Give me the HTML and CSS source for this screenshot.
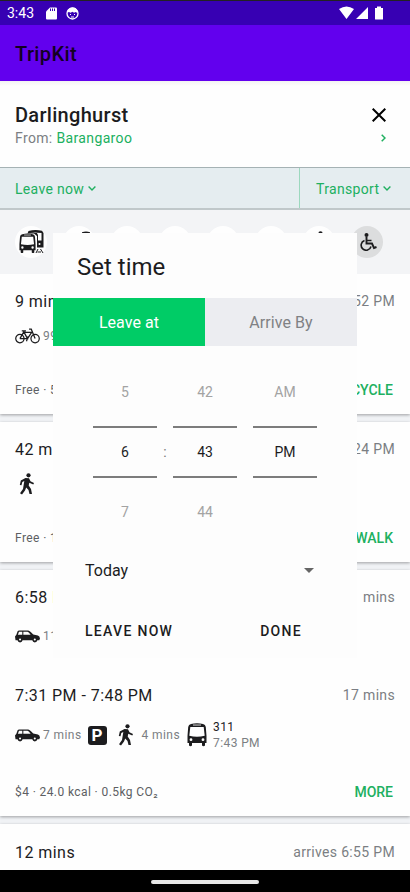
FILE: index.html
```html
<!DOCTYPE html>
<html lang="en">
<head>
<meta charset="utf-8">
<title>TripKit</title>
<link rel="stylesheet" href="styles.css">
</head>
<body>
<svg class="defs" width="0" height="0">
  <symbol id="bus" viewBox="0 0 20 24"><path fill-rule="evenodd" d="M4 1Q10-.6 16 1Q18.500 1.500 18.800 4L19.500 13V20H18V22.500Q16.500 24 15 22.500V20H5V22.500Q3.500 24 2 22.500V20H.5V13L1.200 4Q1.500 1.500 4 1ZM3.300 4L2.300 12.800Q10 14.500 17.700 12.800L16.700 4ZM4 15.300A1.400 1.400 0 1 0 4 18.100A1.400 1.400 0 1 0 4 15.300ZM16 15.300A1.400 1.400 0 1 0 16 18.100A1.400 1.400 0 1 0 16 15.300Z"/><path fill="#999" d="M6 1.300H14V2.800H6Z"/></symbol>
  <symbol id="walk" viewBox="0 0 16 22"><circle cx="9.500" cy="2.300" r="2.100"/><path d="M6.500 5L10 5.200L11.500 8.300L15 10L14.300 11.500L10.300 9.800L9.700 12.500L12 16L13 21H10.500L9.500 17L7.200 14.500L6 17.500L3 21.500L1 20.300L4 16L5.300 8L3.300 9L2.500 12.300L.8 12L1.800 7.600Z"/></symbol>
  <symbol id="car" viewBox="0 0 24 12"><path fill-rule="evenodd" d="M2.500 1Q3 .2 4 .2H12.500Q14 .2 17.500 4L22 5Q23.700 5.500 24 8L23.300 9.700H21.500A2.500 2.500 0 0 1 16.600 9.700H7.300A2.500 2.500 0 0 1 2.400 9.700H.5L0 6L1.300 4.300ZM3.800 1.400L2.800 4.200H7V1.400ZM8 1.400V4.200H15Q13 1.600 12 1.400ZM4.850 7.900A1 1 0 1 0 4.850 9.900A1 1 0 1 0 4.850 7.900ZM19 7.900A1 1 0 1 0 19 9.900A1 1 0 1 0 19 7.900Z"/></symbol>
  <symbol id="bike" viewBox="0 0 24 15"><g fill="none" stroke="#1c1c1e" stroke-width="1.200"><circle cx="4.700" cy="10" r="4"/><circle cx="19.300" cy="10" r="4"/><path d="M4.700 10L8.500 3.500L12 10H4.700M12 10L16 4H8.700M19.300 10L15.600 1H13.500M6.500 2.600H10.500M11 12.500L12.500 8"/></g></symbol>
</svg>
<div class="phone">
  <div class="status">
    <span class="clock">3:43</span>
    <svg class="sd" width="11" height="13" viewBox="0 0 11 13"><path fill="#fff" d="M4 .5H10Q11 .5 11 1.500V11.500Q11 12.500 10 12.500H1Q0 12.500 0 11.500V4.500Z"/><path stroke="#3700b3" d="M4.500 1.500V4M6.500 1.500V4M8.500 1.500V4"/></svg>
    <svg class="face" width="13" height="13" viewBox="0 0 13 13"><circle cx="6.500" cy="6.500" r="5.500" fill="none" stroke="#fff" stroke-width="1.300"/><path fill="#fff" d="M1.500 5.500V3L4 1L6.500.5L9.500 1L11.500 3.500V6L9.500 5L8 5.700L6.500 4.800L4.500 5.800L3 5Z"/><path fill="#fff" d="M4 7h1v1H4zM8 7h1v1H8zM5 9.500h3v1H5z"/></svg>
    <svg class="signals" width="44" height="14" viewBox="0 0 44 14"><path fill="#fff" d="M0 3Q7.500-2 15 3L7.500 13ZM17 13L29 1V13ZM36 2H38V.6H42V2H44V13Q44 13.500 43.500 13.500H36.500Q36 13.500 36 13Z"/></svg>
  </div>
  <div class="appbar">TripKit</div>
  <div class="header">
    <div class="row title-row"><span class="dest">Darlinghurst</span><svg width="14" height="14" viewBox="0 0 14 14"><path d="M.7.700L13.300 13.300M13.300.700L.7 13.300" stroke="#000" stroke-width="2"/></svg></div>
    <div class="row from-row"><span>From: <b>Barangaroo</b></span><svg width="5" height="8" viewBox="0 0 5 8"><path d="M.7.700L4 4L.7 7.300" fill="none" stroke="#20b060" stroke-width="1.500"/></svg></div>
  </div>
  <div class="filters">
    <div class="filter leave"><span>Leave now</span><svg width="8" height="5" viewBox="0 0 8 5"><path d="M.6.600L4 4L7.400.6" fill="none" stroke="#20b060" stroke-width="1.400"/></svg></div>
    <div class="filter transport"><span>Transport</span><svg width="8" height="5" viewBox="0 0 8 5"><path d="M.6.600L4 4L7.400.6" fill="none" stroke="#20b060" stroke-width="1.400"/></svg></div>
  </div>
  <div class="modes">
    <span class="mode"><svg width="25" height="24" viewBox="0 0 25 24"><path d="M8.500 3.500L9.500 1Q16-.8 23 .8L24.500 3V17.500H18V6L15 3.500Z" fill="#1c1c1e"/><path d="M11 2.200H17.500L19 5V10.500H22.500V3Z" fill="#fff"/><circle cx="20.500" cy="14" r="1" fill="#fff"/><path d="M19 19L17 23M21.500 19L24 23M18.500 22H22" stroke="#1c1c1e"/><use href="#bus" x="0" y="3" width="17" height="21"/></svg></span>
    <span class="mode"><svg class="hook" width="8" height="22" viewBox="0 0 8 22"><path d="M0 2Q4 .5 8 2" fill="none" stroke="#1c1c1e" stroke-width="1.500"/></svg></span>
    <span class="mode"></span><span class="mode"></span><span class="mode"></span><span class="mode"></span>
    <span class="mode"><svg width="16" height="22"><use href="#walk"/></svg></span>
    <span class="mode access"><svg width="17" height="18" viewBox="0 0 17 18"><circle cx="6.500" cy="2" r="2"/><path d="M6.500 4V10.500H12L14 15L16.500 14" fill="none" stroke="#1c1c1e" stroke-width="1.900"/><path d="M7 7.500H11.500M4.500 7.500A5 5 0 1 0 11 13.500" fill="none" stroke="#1c1c1e" stroke-width="1.600"/></svg></span>
  </div>
  <div class="trips">
    <div class="card">
      <div class="row times"><span>9 mins</span><span class="arr">arrives 6:52 PM</span></div>
      <div class="segments"><svg class="wide" width="25" height="16"><use href="#bike"/></svg><span class="dur">99%</span></div>
      <div class="row foot"><span>Free · 52.0 kcal</span><b>CYCLE</b></div>
    </div>
    <div class="card">
      <div class="row times"><span>42 mins</span><span class="arr">7:24 PM</span></div>
      <div class="segments"><svg class="person solo" width="16" height="22"><use href="#walk"/></svg></div>
      <div class="row foot"><span>Free · 152 kcal</span><b>WALK</b></div>
    </div>
    <div class="card double">
      <div class="row times"><span>6:58 PM</span><span class="arr">21 mins</span></div>
      <div class="segments"><svg class="wide" width="25" height="13"><use href="#car"/></svg><span class="dur">11 mins</span></div>
      <div class="row times second"><span>7:31 PM - 7:48 PM</span><span class="arr">17 mins</span></div>
      <div class="segments"><svg class="wide" width="25" height="13"><use href="#car"/></svg><span class="dur">7 mins</span><span class="park">P</span><svg class="person" width="16" height="22"><use href="#walk"/></svg><span class="dur four">4 mins</span><svg class="busicon" width="20" height="24"><use href="#bus"/></svg><span class="service"><i>311</i><span>7:43 PM</span></span></div>
      <div class="row foot"><span>$4 · 24.0 kcal · 0.5kg CO₂</span><b>MORE</b></div>
    </div>
    <div class="card last">
      <div class="row times"><span>12 mins</span><span class="arr">arrives 6:55 PM</span></div>
    </div>
  </div>
  <div class="navbar"><span class="pill"></span></div>
  <div class="dialog">
    <div class="dtitle">Set time</div>
    <div class="tabs"><span class="on">Leave at</span><span>Arrive By</span></div>
    <div class="pickers">
      <div class="picker"><span class="dim">5</span><span class="sel">6</span><span class="dim">7</span></div>
      <span class="colon">:</span>
      <div class="picker"><span class="dim">42</span><span class="sel">43</span><span class="dim">44</span></div>
      <div class="picker ampm"><span class="dim">AM</span><span class="sel">PM</span></div>
    </div>
    <div class="day"><span>Today</span><svg width="10" height="5" viewBox="0 0 10 5"><path d="M0 0H10L5 5Z" fill="#666"/></svg></div>
    <div class="actions"><span>LEAVE NOW</span><span>DONE</span></div>
  </div>
</div>
</body>
</html>
```
FILE: styles.css
```css
* { box-sizing: border-box; }
body { margin: 0; font-family: Roboto, sans-serif; color: #1c1c1e; background: #fff; }
svg { display: block; flex: none; fill: #1c1c1e; }
.defs { position: absolute; }
b, i { font-style: normal; font-weight: inherit; }
span { white-space: nowrap; }
.phone { position: relative; width: 410px; height: 892px; overflow: hidden; display: flex; flex-direction: column; }
.status { height: 25px; flex: none; background: #3700b3; border-top: 1px solid #222; display: flex; align-items: center; padding: 0 27px 0 7px; color: #fff; }
.clock { font-size: 14px; letter-spacing: 0; width: 39px; }
.face { margin-left: 9px; }
.signals { margin-left: auto; }
.appbar { height: 56px; flex: none; background: #6200ee; color: #130022; font-size: 20px; font-weight: 500; line-height: 58px; padding-left: 15px; letter-spacing: .4px; }
.row { display: flex; justify-content: space-between; align-items: center; }
.header { height: 86px; flex: none; background: linear-gradient(#f3f3f3, #fefefe 5px); padding: 22px 24px 0 15px; }
.title-row { height: 24px; font-size: 20px; font-weight: 500; letter-spacing: .3px; }
.from-row { height: 22px; font-size: 14px; letter-spacing: .36px; color: #7b7e83; }
.from-row b { color: #20b060; }
.filters { height: 43px; flex: none; display: flex; background: #e5edf0; border-top: 1px solid #a5b2b4; border-bottom: 2px solid #c0c8ca; color: #20b060; font-size: 14px; letter-spacing: .32px; }
.filter { display: flex; align-items: center; gap: 4px; padding: 1px 0 0 15px; }
.leave { width: 300px; border-right: 1px solid #9cd8be; }
.transport { padding-left: 16px; }
.modes { height: 64px; flex: none; background: #f3f4f6; display: flex; gap: 16px; padding: 16px 0 0 15px; }
.mode { width: 32px; height: 32px; border-radius: 50%; background: #fefefe; display: flex; align-items: center; justify-content: center; }
.hook { margin-left: 14px; }
.access { background: #dcddde; }
.access svg { margin-left: 2px; }
.trips { flex: 1; min-height: 0; background: #f1f3f6; display: flex; flex-direction: column; gap: 8px; overflow: hidden; }
.card { height: 140px; flex: none; background: #fefefe; padding: 15px 15px 0; box-shadow: 0 1px 3px rgba(0,0,0,.35); }
.card.double { height: 246px; }
.card.last { padding-top: 16px; }
.times { height: 24px; font-size: 16px; letter-spacing: .45px; }
.arr { font-size: 14px; color: #7b7e83; letter-spacing: .33px; }
.segments { height: 40px; margin-top: 3px; display: flex; align-items: center; }
.dur { font-size: 12px; letter-spacing: .42px; color: #7b7e83; margin-left: 3px; }
.solo { margin-left: 4px; }
.foot { height: 20px; margin-top: 24px; font-size: 12px; letter-spacing: .4px; color: #5d5f63; }
.foot b { color: #20b060; font-size: 14px; font-weight: 500; letter-spacing: 0; padding-right: 2px; }
.second { margin-top: 29px; }
.double .segments { height: 36px; margin-top: 9px; }
.double .second + .segments { margin-top: 10px; }
.park { width: 19px; height: 19px; border-radius: 3px; background: #1c1c1e; color: #fff; font-size: 17px; font-weight: 700; line-height: 19px; text-align: center; margin: 0 11px 0 6px; }
.four { margin-left: 8px; }
.busicon { margin-left: 7px; }
.service { display: flex; flex-direction: column; font-size: 12px; line-height: 16px; letter-spacing: .4px; color: #7b7e83; margin-left: 6px; }
.service i { color: #1c1c1e; }
.double .foot { margin-top: 29px; }
.navbar { height: 22px; flex: none; background: #000; display: flex; justify-content: center; padding-top: 10px; z-index: 1; }
.pill { width: 108px; height: 4px; border-radius: 2px; background: #e8e8e8; }
.dialog { position: absolute; left: 53px; top: 233px; width: 304px; height: 425px; background: #fdfdfd; display: flex; flex-direction: column; }
.dtitle { height: 65px; padding: 1px 0 0 24px; font-size: 24px; line-height: 66px; letter-spacing: 0; }
.tabs { height: 48px; display: flex; background: #ecedf1; color: #808184; font-size: 16px; line-height: 50px; text-align: center; letter-spacing: .05px; }
.tabs span { flex: 1; }
.tabs .on { background: #00cc66; color: #fff; }
.pickers { height: 184px; margin-top: 16px; padding-left: 40px; display: flex; }
.picker { width: 64px; display: flex; flex-direction: column; text-align: center; font-size: 14px; }
.picker .dim { height: 64px; line-height: 61px; color: #a3a3a3; }
.picker .sel { height: 52px; line-height: 48px; border-top: 2px solid #7c7c7c; border-bottom: 2px solid #7c7c7c; }
.picker .sel + .dim { line-height: 69px; }
.colon { width: 16px; text-align: center; font-size: 14px; line-height: 180px; color: #777; }
.ampm { margin-left: 16px; }
.day { height: 40px; margin-top: 4px; padding: 0 43px 0 32px; display: flex; align-items: center; justify-content: space-between; font-size: 16px; }
.actions { height: 40px; margin-top: 21px; padding: 0 55px 0 32px; display: flex; align-items: center; justify-content: space-between; font-size: 14px; font-weight: 500; letter-spacing: 1.3px; }
```
